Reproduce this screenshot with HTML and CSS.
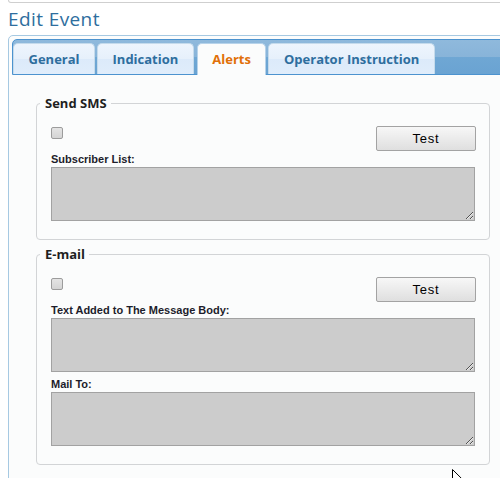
FILE: index.html
```html
<!DOCTYPE html>
<html lang="en">
<head>
<meta charset="utf-8">
<title>Edit Event</title>
<link rel="stylesheet" href="styles.css">
</head>
<body>
<div class="page">
  <div class="top-box"></div>
  <h1 class="title">Edit Event</h1>

  <div class="panel">
    <ul class="tabs">
      <li class="tab">General</li>
      <li class="tab">Indication</li>
      <li class="tab tab-active">Alerts</li>
      <li class="tab">Operator Instruction</li>
    </ul>

    <div class="tab-body">
      <fieldset class="group">
        <legend class="group-title">Send SMS</legend>
        <div class="group-body">
          <div class="row">
            <input type="checkbox" class="check">
            <button type="button" class="btn">Test</button>
          </div>
          <label class="field-label">Subscriber List:</label>
          <textarea class="area"></textarea>
        </div>
      </fieldset>

      <fieldset class="group">
        <legend class="group-title">E-mail</legend>
        <div class="group-body">
          <div class="row">
            <input type="checkbox" class="check">
            <button type="button" class="btn">Test</button>
          </div>
          <label class="field-label">Text Added to The Message Body:</label>
          <textarea class="area"></textarea>
          <label class="field-label">Mail To:</label>
          <textarea class="area"></textarea>
        </div>
      </fieldset>
    </div>
  </div>
</div>

<svg class="cursor" width="12" height="19" viewBox="0 0 12 19">
  <path d="M0.5 0.5 L0.5 16 L4.3 12.3 L6.8 18 L9 17 L6.6 11.4 L11.5 11.4 Z" fill="#fff" stroke="#000" stroke-width="1"/>
</svg>
</body>
</html>
```

FILE: styles.css
```css
html, body {
  margin: 0;
  padding: 0;
  background: #ffffff;
  overflow: hidden;
}

body {
  width: 500px;
  height: 478px;
  position: relative;
  font-family: "Open Sans", "Liberation Sans", sans-serif;
}

.page {
  width: 530px;
  padding-left: 8px;
}

/* bottom edge of the box above the editor */
.top-box {
  height: 2px;
  border: 1px solid #cfcfcf;
  border-top: 0;
  border-radius: 0 0 4px 4px;
}

.title {
  margin: 4px 0 4px;
  font-size: 19px;
  line-height: 24px;
  font-weight: 400;
  color: #2e6e9e;
  letter-spacing: 0.4px;
}

/* tabbed panel */
.panel {
  border: 1px solid #a6c9e2;
  border-radius: 5px;
  padding: 3px;
  background: #fbfcfc;
  min-height: 500px;
}

.tabs {
  list-style: none;
  margin: 0;
  padding: 3px 0 0 0;
  display: flex;
  gap: 2px;
  height: 31px;
  border: 1px solid #4c93cf;
  border-radius: 5px 5px 0 0;
  background: linear-gradient(#8fb9dc 0%, #88b4d9 50%, #6fa7d4 50%, #6aa3d2 100%);
}

.tab {
  height: 31px;
  padding: 0 14.5px;
  border: 1px solid #c5dbec;
  border-bottom: 0;
  border-radius: 5px 5px 0 0;
  box-sizing: border-box;
  background: linear-gradient(#eef5fd 0%, #e6f0fb 50%, #dceafa 50%, #e0edfb 100%);
  color: #2e6e9e;
  font-size: 13px;
  font-weight: 700;
  line-height: 31px;
  white-space: nowrap;
}

.tab-active {
  height: 32px;
  margin-bottom: -1px;
  background: #fbfcfc;
  border-color: #b7d3ea;
  color: #e17009;
  margin-left: 1px;
}

.tab-body {
  padding: 20px 0 10px 24px;
}

/* field groups */
.group {
  width: 454px;
  box-sizing: border-box;
  margin: 0 0 6px;
  padding: 0;
  border: 1px solid #d2d4d6;
  border-radius: 4px;
  min-inline-size: 0;
}

.group-title {
  margin-left: 3px;
  padding: 0 4px 0 5px;
  font-size: 13px;
  line-height: 17px;
  font-weight: 700;
  color: #1f1f1f;
}

.group-body {
  padding: 14px 14px 12px 14px;
}

.row {
  display: flex;
  justify-content: space-between;
  align-items: flex-start;
  height: 25px;
}

.check {
  appearance: none;
  -webkit-appearance: none;
  width: 12px;
  height: 12px;
  margin: 1px 0 0;
  border: 1px solid #9c9c9c;
  border-radius: 2px;
  background: linear-gradient(#e4e4e4, #d4d4d4);
  box-sizing: border-box;
}

.btn {
  width: 100px;
  height: 25px;
  margin-right: -1px;
  padding: 0;
  border: 1px solid #a3a3a3;
  border-radius: 2px;
  background: linear-gradient(#f7f7f7, #dfdfdf);
  font-family: "Liberation Sans", Arial, sans-serif;
  font-size: 13px;
  letter-spacing: 0.8px;
  color: #000;
}

.field-label {
  display: block;
  margin: 2px 0 1px;
  font-family: "Liberation Sans", Arial, sans-serif;
  font-size: 11px;
  font-weight: 700;
  line-height: 13px;
  color: #1d1d2b;
}

.area {
  display: block;
  width: 424px;
  height: 54px;
  box-sizing: border-box;
  margin: 0 0 6px;
  padding: 2px;
  border: 1px solid #a2a2a2;
  border-radius: 0;
  background: #cccccc;
}

.cursor {
  position: absolute;
  left: 452px;
  top: 469px;
}
```
